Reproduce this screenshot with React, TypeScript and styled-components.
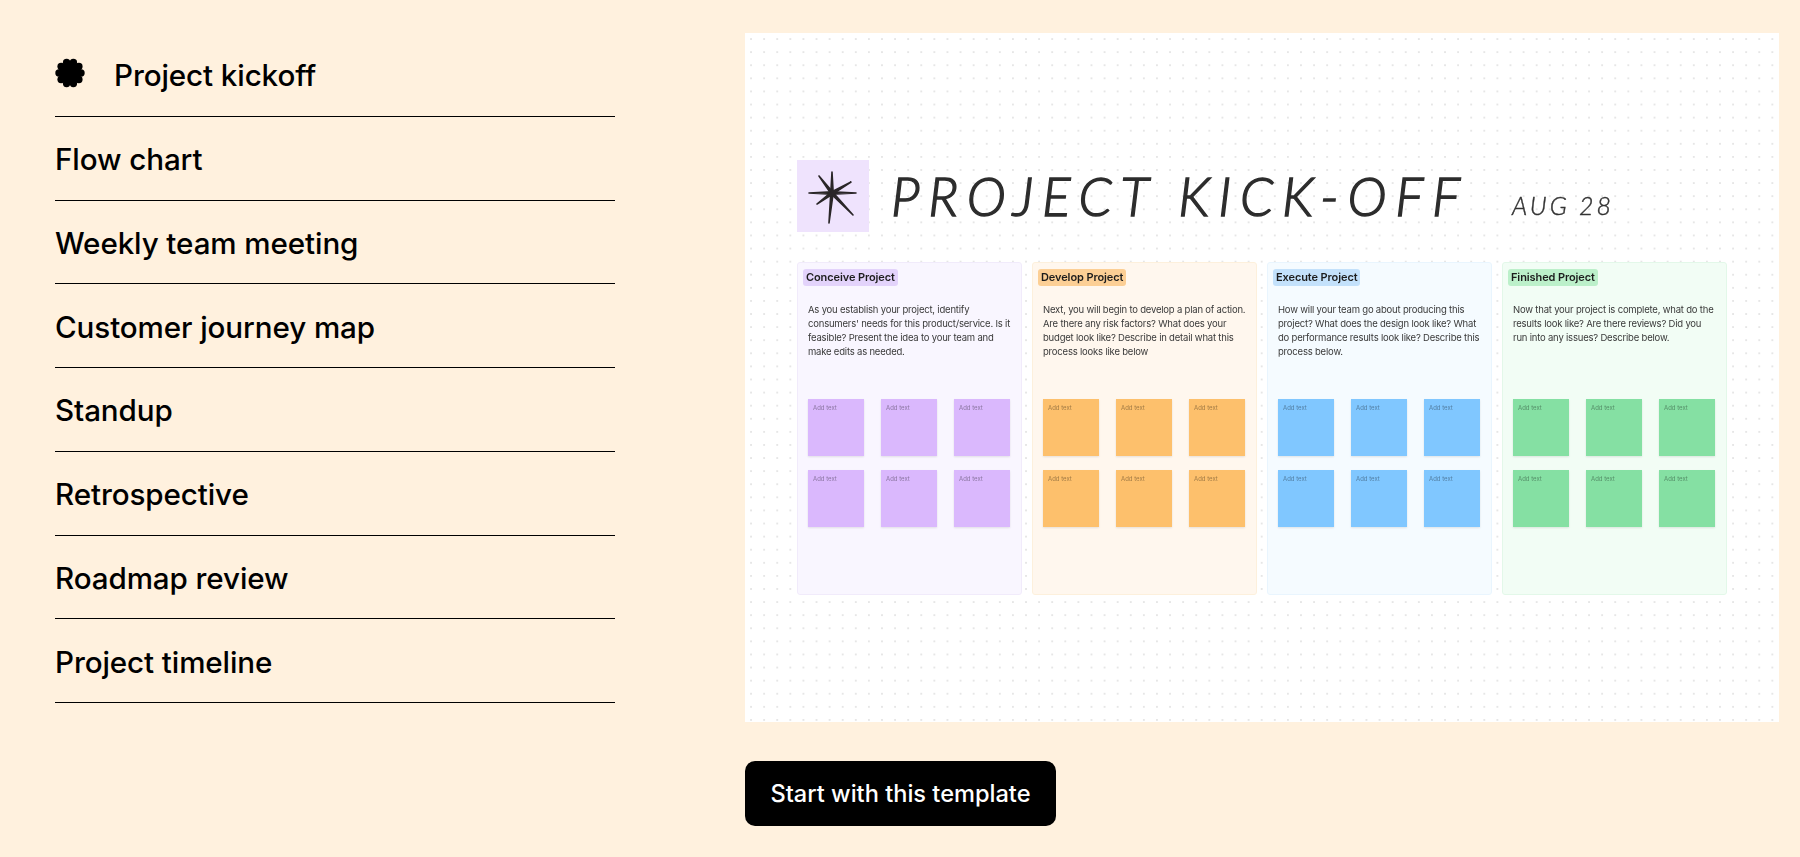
import React from 'react';
import styled, { createGlobalStyle } from 'styled-components';

const GlobalStyle = createGlobalStyle`
  html, body {
    margin: 0;
    padding: 0;
    background: #fff1de;
  }
  * {
    box-sizing: border-box;
  }
`;

const templates = [
  'Project kickoff',
  'Flow chart',
  'Weekly team meeting',
  'Customer journey map',
  'Standup',
  'Retrospective',
  'Roadmap review',
  'Project timeline',
];

const columns = [
  {
    title: 'Conceive Project',
    text: "As you establish your project, identify consumers' needs for this product/service. Is it feasible? Present the idea to your team and make edits as needed.",
    bg: '#f9f6ff',
    edge: '#f1ebfb',
    tag: '#e3d3fb',
    note: '#dab8fd',
  },
  {
    title: 'Develop Project',
    text: 'Next, you will begin to develop a plan of action. Are there any risk factors? What does your budget look like? Describe in detail what this process looks like below',
    bg: '#fff7ee',
    edge: '#fdf0dc',
    tag: '#fccf95',
    note: '#fdc06c',
  },
  {
    title: 'Execute Project',
    text: 'How will your team go about producing this project? What does the design look like? What do performance results look like? Describe this process below.',
    bg: '#f5fbff',
    edge: '#e9f5fe',
    tag: '#c3e1fb',
    note: '#80c7ff',
  },
  {
    title: 'Finished Project',
    text: 'Now that your project is complete, what do the results look like? Are there reviews? Did you run into any issues? Describe below.',
    bg: '#f2fdf5',
    edge: '#e3f8e9',
    tag: '#bcf0ca',
    note: '#85e0a3',
  },
];

const FlowerIcon = () => (
  <svg width="30" height="30" viewBox="0 0 30 30" fill="#000">
    <circle cx="15" cy="15" r="11" />
    {Array.from({ length: 10 }).map((_, i) => (
      <circle
        key={i}
        cx={15 + 11 * Math.cos((i * Math.PI) / 5)}
        cy={15 + 11 * Math.sin((i * Math.PI) / 5)}
        r="3.7"
      />
    ))}
  </svg>
);

// tips of the hand drawn star, relative to the 72px square
const starTips = [
  [12, 33],
  [59, 33],
  [35, 12],
  [32, 63],
  [22, 16],
  [56, 55],
  [20, 44],
  [54, 22],
];

const StarIcon = () => (
  <svg width="72" height="72" viewBox="0 0 72 72" fill="#2a2628">
    {starTips.map(([x, y]) => {
      const dx = x - 35;
      const dy = y - 33;
      const len = Math.hypot(dx, dy);
      const px = (-dy / len) * 1.2;
      const py = (dx / len) * 1.2;
      return (
        <polygon
          key={`${x}-${y}`}
          points={`${x},${y} ${35 + px},${33 + py} ${35 - px},${33 - py}`}
          stroke="#2a2628"
          strokeWidth="1.6"
          strokeLinejoin="round"
        />
      );
    })}
  </svg>
);

export default function App() {
  return (
    <Page>
      <GlobalStyle />
      <TemplateList>
        {templates.map((name, i) => (
          <TemplateRow key={name}>
            {i === 0 && (
              <IconSlot>
                <FlowerIcon />
              </IconSlot>
            )}
            {name}
          </TemplateRow>
        ))}
      </TemplateList>
      <Preview>
        <Board>
          <BoardHeader>
            <StarTile>
              <StarIcon />
            </StarTile>
            <BoardTitle>PROJECT KICK-OFF</BoardTitle>
            <BoardDate>AUG 28</BoardDate>
          </BoardHeader>
          <Columns>
            {columns.map((col) => (
              <Column key={col.title} $bg={col.bg} $edge={col.edge}>
                <ColumnTag $bg={col.tag}>{col.title}</ColumnTag>
                <ColumnText>{col.text}</ColumnText>
                <Notes>
                  {Array.from({ length: 6 }).map((_, i) => (
                    <Note key={i} $bg={col.note}>
                      Add text
                    </Note>
                  ))}
                </Notes>
              </Column>
            ))}
          </Columns>
        </Board>
        <StartButton>Start with this template</StartButton>
      </Preview>
    </Page>
  );
}

const Page = styled.div`
  display: grid;
  grid-template-columns: 560px 1034px;
  column-gap: 130px;
  width: 1800px;
  height: 857px;
  padding: 33px 0 0 55px;
  overflow: hidden;
  background: #fff1de;
`;

const TemplateList = styled.ul`
  margin: 0;
  padding: 0;
  list-style: none;
`;

const TemplateRow = styled.li`
  display: flex;
  align-items: center;
  height: 83.75px;
  padding-top: 2px;
  border-bottom: 1px solid #000;
  font-family: 'Inter', 'Liberation Sans', sans-serif;
  font-size: 29.6px;
  font-weight: 500;
  letter-spacing: -0.1px;
  color: #000;
`;

const IconSlot = styled.span`
  display: flex;
  width: 59px;
  margin-top: -4px;
`;

const Preview = styled.div`
  display: flex;
  flex-direction: column;
  align-items: flex-start;
`;

const Board = styled.div`
  width: 1034px;
  height: 689px;
  padding: 127px 52px 0;
  background-color: #fff;
  background-image: radial-gradient(circle, #e6e6e6 0.7px, transparent 1.2px);
  background-size: 13.1px 13.1px;
  background-position: -0.5px -0.5px;
  font-family: 'Inter', 'Liberation Sans', sans-serif;
`;

const BoardHeader = styled.div`
  display: flex;
  align-items: flex-end;
  height: 72px;
  filter: blur(0.3px);
`;

const StarTile = styled.div`
  display: flex;
  width: 72px;
  height: 72px;
  background: #efe3fd;
`;

const BoardTitle = styled.div`
  margin: 0 0 4px 22px;
  width: 621px;
  font-family: 'Lato', sans-serif;
  font-size: 53px;
  font-style: italic;
  font-weight: 300;
  line-height: 64px;
  letter-spacing: 8.7px;
  white-space: nowrap;
  color: #2d2d2d;
  -webkit-text-stroke: 1.4px #2d2d2d;
`;

const BoardDate = styled.div`
  margin-bottom: 12px;
  font-family: 'Lato', sans-serif;
  font-size: 25px;
  font-style: italic;
  font-weight: 300;
  line-height: 30px;
  letter-spacing: 3px;
  white-space: nowrap;
  color: #333;
  -webkit-text-stroke: 0.4px #333;
`;

const Columns = styled.div`
  display: grid;
  grid-template-columns: repeat(4, 225px);
  column-gap: 10px;
  margin-top: 30px;
  filter: blur(0.3px);
`;

const Column = styled.div<{ $bg: string; $edge: string }>`
  height: 333px;
  padding: 6px 5px;
  border: 1px solid ${(props) => props.$edge};
  border-radius: 3px;
  background: ${(props) => props.$bg};
`;

const ColumnTag = styled.div<{ $bg: string }>`
  width: fit-content;
  height: 17px;
  padding: 0 3px;
  border-radius: 3px;
  background: ${(props) => props.$bg};
  font-size: 11px;
  font-weight: 600;
  line-height: 17px;
  letter-spacing: -0.1px;
  color: #1c1c1c;
`;

const ColumnText = styled.p`
  width: 204px;
  height: 56px;
  margin: 17px 0 40px 5px;
  font-size: 9.5px;
  line-height: 14px;
  letter-spacing: -0.2px;
  color: #3a3a3a;
`;

const Notes = styled.div`
  display: grid;
  grid-template-columns: repeat(3, 56px);
  grid-auto-rows: 57px;
  column-gap: 17px;
  row-gap: 14px;
  margin-left: 5px;
`;

const Note = styled.div<{ $bg: string }>`
  padding: 5px;
  background: ${(props) => props.$bg};
  box-shadow: 0 1px 2px rgba(0, 0, 0, 0.1);
  font-size: 6px;
  line-height: 8px;
  color: rgba(0, 0, 0, 0.38);
`;

const StartButton = styled.button`
  width: 311px;
  height: 65px;
  margin-top: 39px;
  padding: 0;
  border: none;
  border-radius: 10px;
  background: #000;
  font-family: 'Inter', 'Liberation Sans', sans-serif;
  font-size: 23.6px;
  font-weight: 500;
  color: #fff;
`;
